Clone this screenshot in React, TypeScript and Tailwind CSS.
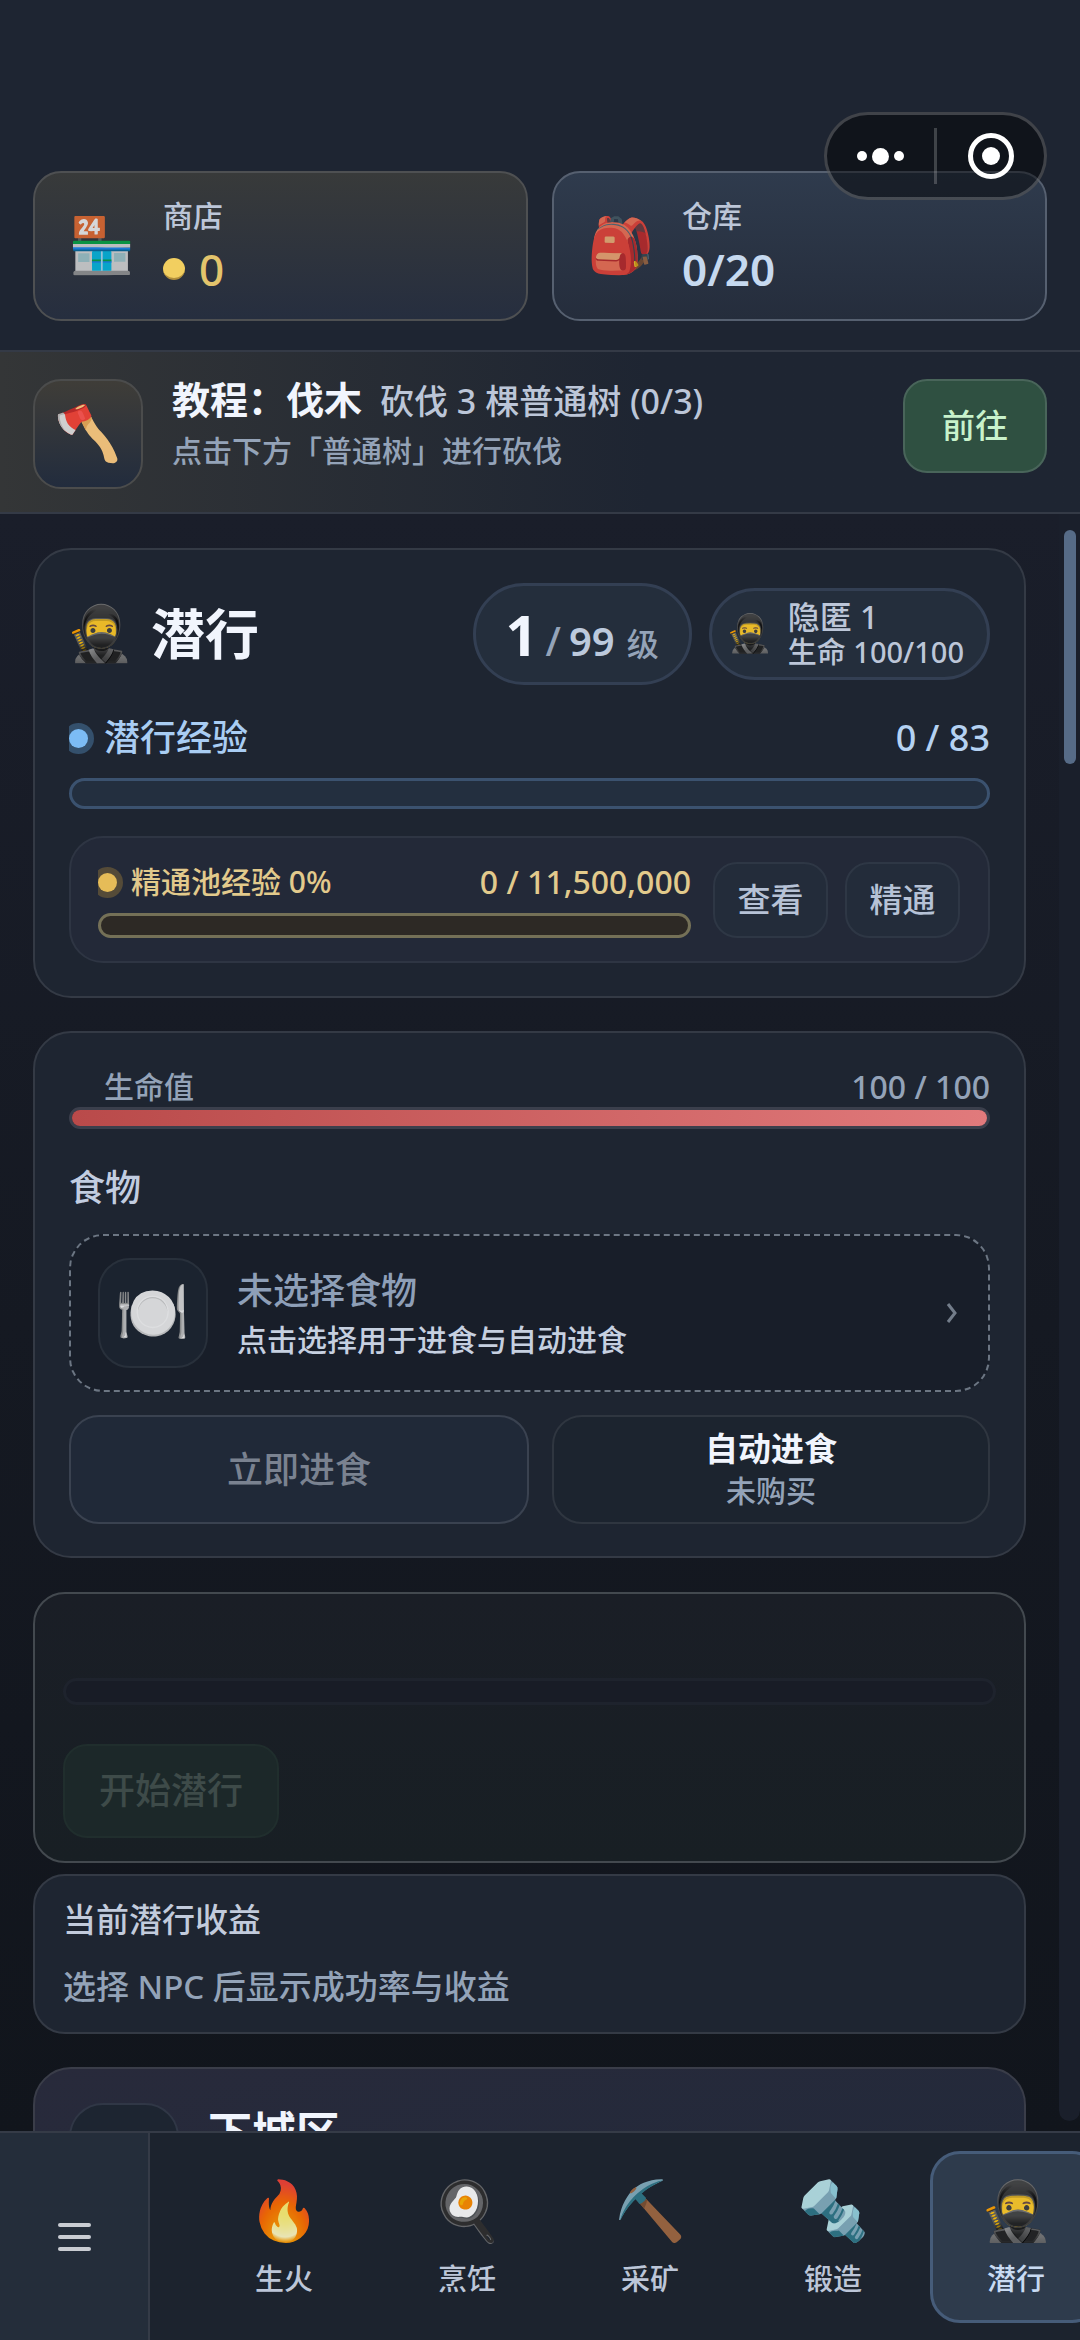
import type { ReactNode } from "react";

function Emoji({ children, className }: { children: ReactNode; className: string }) {
  return (
    <span aria-hidden="true" className={`flex shrink-0 items-center justify-center font-['Noto_Color_Emoji'] ${className}`}>
      {children}
    </span>
  );
}

function Capsule() {
  return (
    <div className="absolute top-[112px] right-[33px] flex h-[88px] w-[223px] items-center rounded-full border-[3px] border-white/20 bg-black/45">
      <button type="button" aria-label="更多" className="flex flex-1 items-center justify-center gap-[5px]">
        <span className="size-[10px] rounded-full bg-white" />
        <span className="size-[17px] rounded-full bg-white" />
        <span className="size-[10px] rounded-full bg-white" />
      </button>
      <span className="h-14 w-[3px] bg-white/20" />
      <button type="button" aria-label="关闭" className="flex flex-1 items-center justify-center">
        <span className="flex size-[46px] items-center justify-center rounded-full border-[5px] border-white">
          <span className="size-[18px] rounded-full bg-white" />
        </span>
      </button>
    </div>
  );
}

function Header() {
  return (
    <header className="grid grid-cols-2 gap-6 border-b-2 border-[#343a46] bg-[#1e2532] px-[33px] pt-[171px] pb-[29px]">
      <button type="button" className="flex h-[150px] items-center gap-[31px] rounded-[28px] border-2 border-[#4e5052] bg-linear-to-b from-[#383a3a] to-[#262e3f] pl-[37px] text-left">
        <Emoji className="w-[60px] text-[54px] leading-[64px] opacity-80">🏪</Emoji>
        <span className="flex flex-col">
          <span className="text-[30px] leading-[42px] text-[#bcc6d8]">商店</span>
          <span className="mt-1 flex items-center gap-[14px] text-[44px] leading-[56px] text-[#e3c46c]">
            <span className="size-[22px] rounded-full border-b-2 border-[#b08e3c] bg-[#f2cf60]" />0
          </span>
        </span>
      </button>
      <button type="button" className="flex h-[150px] items-center gap-[31px] rounded-[28px] border-2 border-[#566070] bg-linear-to-b from-[#2f3b4d] to-[#252d3c] pl-[37px] text-left">
        <Emoji className="w-[60px] text-[54px] leading-[64px] opacity-80">🎒</Emoji>
        <span className="flex flex-col">
          <span className="text-[30px] leading-[42px] text-[#bcc6d8]">仓库</span>
          <span className="mt-1 text-[44px] leading-[56px] font-semibold text-[#c6d9ef]">0/20</span>
        </span>
      </button>
    </header>
  );
}

function Tutorial() {
  return (
    <section className="flex items-start border-b-2 border-[#343a46] bg-[#1e2532] bg-linear-to-r from-[#343637] to-[#1e2532] to-60% px-[33px] pt-[27px] pb-[23px]">
      <div className="flex size-[110px] shrink-0 items-center justify-center rounded-[28px] border-2 border-[#4b4c4c] bg-linear-to-b from-[#3f3d38] to-[#222c3d]">
        <Emoji className="text-[54px] leading-[64px] opacity-90">🪓</Emoji>
      </div>
      <div className="ml-[29px] flex-1">
        <div className="flex items-baseline gap-[18px]">
          <h2 className="text-[38px] leading-[40px] font-bold text-[#f1f5fd]">教程：伐木</h2>
          <span className="text-[34px] leading-[40px] text-[#bcc6d8]">砍伐 3 棵普通树 (0/3)</span>
        </div>
        <p className="mt-[10px] text-[30px] leading-[40px] text-[#94a3b8]">点击下方「普通树」进行砍伐</p>
      </div>
      <button type="button" className="h-[94px] w-36 rounded-[24px] border-2 border-[#49655a] bg-[#2f5041] text-[33px] text-[#c8f2cb]">
        前往
      </button>
    </section>
  );
}

function Dot({ className }: { className: string }) {
  return (
    <span className="flex h-8 w-[25px] shrink-0 items-center overflow-hidden">
      <span className={`size-[19px] rounded-full ring-[6px] ${className}`} />
    </span>
  );
}

function SkillCard() {
  return (
    <section className="rounded-[38px] border-2 border-[#343a45] bg-[#1e2531] px-[34px] py-[33px]">
      <div className="flex h-[102px] items-center">
        <Emoji className="w-[62px] text-[54px] leading-[64px] opacity-90">🥷</Emoji>
        <h1 className="ml-5 flex-1 text-[54px] leading-[64px] font-bold text-[#f1f5fd]">潜行</h1>
        <div className="flex h-[102px] items-baseline rounded-full border-[3px] border-[#333f53] bg-[#242e3c] px-[30px] leading-[96px] text-[#94a3b8]">
          <span className="text-[56px] font-bold text-[#f1f5fd]">1</span>
          <span className="ml-2 text-[40px]">/</span>
          <span className="ml-2 text-[40px] font-semibold text-[#bcc9dc]">99</span>
          <span className="ml-3 text-[32px]">级</span>
        </div>
        <div className="ml-[17px] flex h-[92px] items-center rounded-full border-[3px] border-[#333f53] bg-[#242e3c] pr-[23px] pl-4 text-[#bcc6d8]">
          <Emoji className="w-[44px] text-[37px] leading-[44px] opacity-90">🥷</Emoji>
          <div className="ml-4">
            <div className="text-[32px] leading-[36px]">隐匿 1</div>
            <div className="text-[29px] leading-[34px]">生命 100/100</div>
          </div>
        </div>
      </div>

      <div className="mt-[26px] flex items-center text-[36px] leading-[54px] text-[#a9cdf3]">
        <Dot className="bg-[#7cbcf5] ring-[#34506c]" />
        <span id="xp-label" className="ml-[10px] flex-1">潜行经验</span>
        <span className="text-[#b5d2f2]">0 / 83</span>
      </div>
      <div role="progressbar" aria-labelledby="xp-label" aria-valuenow={0} aria-valuemax={83} className="mt-[13px] h-[31px] rounded-full border-[3px] border-[#3b526f] bg-[#232f3f]" />

      <div className="mt-[27px] flex items-center rounded-[34px] border-2 border-[#2e3543] bg-[#232938] py-[23px] pr-[28px] pl-[27px]">
        <div className="flex-1">
          <div className="flex items-center text-[#e2ca8c]">
            <Dot className="bg-[#e6bc58] ring-[#554b38]" />
            <span id="pool-label" className="ml-2 flex-1 text-[30px] leading-[42px]">精通池经验 0%</span>
            <span className="text-[32px] leading-[42px]">0 / 11,500,000</span>
          </div>
          <div role="progressbar" aria-labelledby="pool-label" aria-valuenow={0} aria-valuemax={11500000} className="mt-[10px] h-[25px] rounded-full border-[3px] border-[#747057] bg-[#2d2925]" />
        </div>
        <div className="ml-[22px] flex gap-[17px] text-[33px] text-[#b6c2d6]">
          <button type="button" className="h-[76px] w-[115px] rounded-[24px] border-2 border-[#2e3745] bg-[#232c3a]">查看</button>
          <button type="button" className="h-[76px] w-[115px] rounded-[24px] border-2 border-[#2e3745] bg-[#232c3a]">精通</button>
        </div>
      </div>
    </section>
  );
}

function FoodCard() {
  return (
    <section className="mt-[33px] rounded-[38px] border-2 border-[#343a45] bg-[#1e2531] px-[34px] pt-[34px] pb-8">
      <div className="flex justify-between pl-[35px] leading-[40px] text-[#94a3b8]">
        <span id="hp-label" className="text-[30px]">生命值</span>
        <span className="text-[32px]">100 / 100</span>
      </div>
      <div role="progressbar" aria-labelledby="hp-label" aria-valuenow={100} aria-valuemax={100} className="h-[22px] rounded-full border-[3px] border-[#3b3f4c]">
        <div className="h-4 rounded-full bg-linear-to-r from-[#b94a4a] to-[#e17a7c]" />
      </div>
      <h2 className="mt-[34px] text-[36px] leading-[50px] text-[#c2cde0]">食物</h2>
      <button type="button" className="mt-[21px] flex w-full items-center rounded-[34px] border-2 border-dashed border-[#6c7683] bg-[#181e29] px-[27px] py-[22px] text-left">
        <span className="flex size-[110px] items-center justify-center rounded-[32px] border-2 border-[#28303b] bg-[#1b232f]">
          <Emoji className="text-[60px] leading-[72px] opacity-85">🍽️</Emoji>
        </span>
        <span className="ml-[29px] flex flex-1 flex-col">
          <span className="text-[36px] leading-[48px] text-[#8e9fb7]">未选择食物</span>
          <span className="mt-[5px] text-[30px] leading-[40px] text-[#c6d0e0]">点击选择用于进食与自动进食</span>
        </span>
        <svg viewBox="0 0 12 20" className="mr-[3px] h-5 w-3 fill-none stroke-[#737d8a] stroke-3">
          <path d="M2 1L9 10L2 19" />
        </svg>
      </button>
      <div className="mt-[23px] grid grid-cols-[21fr_20fr] gap-[23px]">
        <button type="button" disabled className="h-[109px] rounded-[30px] border-2 border-[#3a4250] bg-[#202938] text-[36px] text-[#7a8290]">
          立即进食
        </button>
        <button type="button" className="flex h-[109px] flex-col items-center justify-center rounded-[30px] border-2 border-[#2f3640] bg-[#1c242f]">
          <span className="text-[33px] leading-[42px] font-bold text-[#f1f5fd]">自动进食</span>
          <span className="text-[30px] leading-[42px] text-[#94a3b8]">未购买</span>
        </button>
      </div>
    </section>
  );
}

function StealthPanels() {
  return (
    <>
      <section className="mt-[34px] rounded-[32px] border-2 border-[#43494f] bg-linear-to-b from-[#1a1e26] to-[#181f24] px-[28px] pt-[84px] pb-[23px]">
        <div role="progressbar" aria-label="潜行进度" aria-valuenow={0} className="h-[27px] rounded-full border-[3px] border-[#1e232d] bg-[#181c26]" />
        <button type="button" disabled className="mt-[39px] h-[94px] rounded-[24px] border-2 border-[#202e2d] bg-[#1c2829] px-[34px] text-[36px] text-[#3e4b49]">
          开始潜行
        </button>
      </section>
      <section className="mt-[11px] rounded-[32px] border-2 border-[#343a45] bg-[#1e2531] px-[28px] pt-[21px] pb-[22px] text-[33px] leading-[46px]">
        <h2 className="text-[#c2cbdc]">当前潜行收益</h2>
        <p className="mt-[21px] text-[#93a3b8]">选择 NPC 后显示成功率与收益</p>
      </section>
      <section className="mt-[33px] flex h-[240px] items-start rounded-[38px] border-2 border-[#3a3d49] bg-linear-to-br from-[#282a3b] to-[#20293a] px-[34px] pt-[34px]">
        <div className="size-[110px] rounded-[34px] border-2 border-[#303746] bg-[#1d2531]" />
        <h2 className="ml-[29px] text-[44px] leading-[58px] font-bold text-[#f1f5fd]">下城区</h2>
      </section>
    </>
  );
}

const tabs = [
  { icon: "🔥", label: "生火", active: false },
  { icon: "🍳", label: "烹饪", active: false },
  { icon: "⛏️", label: "采矿", active: false },
  { icon: "🔩", label: "锻造", active: false },
  { icon: "🥷", label: "潜行", active: true },
];

function BottomNav() {
  return (
    <nav className="flex h-[209px] shrink-0 border-t-2 border-[#353b47] bg-[#1c232e]">
      <button type="button" aria-label="菜单" className="flex w-[150px] shrink-0 flex-col items-center justify-center gap-2 border-r-2 border-[#353b47] bg-[#242d3a]">
        <span className="h-1 w-[33px] rounded-full bg-[#c9ccd2]" />
        <span className="h-1 w-[33px] rounded-full bg-[#c9ccd2]" />
        <span className="h-1 w-[33px] rounded-full bg-[#c9ccd2]" />
      </button>
      <div className="flex flex-1 gap-[11px] overflow-hidden pt-[18px] pl-12">
        {tabs.map((t) => (
          <button
            key={t.label}
            type="button"
            className={`flex h-[172px] w-[172px] shrink-0 flex-col items-center rounded-[30px] border-[3px] pt-[23px] text-[29px] leading-[40px] ${
              t.active ? "border-[#465c79] bg-[#2e3b4c] text-[#c8daf2]" : "border-transparent text-[#bcc6d8]"
            }`}
          >
            <Emoji className="text-[58px] leading-[68px] opacity-90">{t.icon}</Emoji>
            <span className="mt-[14px]">{t.label}</span>
          </button>
        ))}
      </div>
    </nav>
  );
}

export default function App() {
  return (
    <div className="relative flex h-screen flex-col overflow-hidden bg-[#12161e] font-['Noto_Sans','Noto_Sans_CJK_SC',sans-serif] font-medium">
      <Header />
      <Capsule />
      <Tutorial />
      <div className="flex min-h-0 flex-1 bg-linear-to-b from-[#1a1e2a] via-[#151922] to-[#11151c]">
        <main className="min-w-0 flex-1 overflow-hidden pt-[34px] pl-[33px]">
          <SkillCard />
          <FoodCard />
          <StealthPanels />
        </main>
        <div className="mb-[10px] ml-[33px] w-[21px] rounded-b-full bg-[#1a1f2b] pt-4 pl-[5px]">
          <div className="h-[234px] w-3 rounded-full bg-[#566b87]" />
        </div>
      </div>
      <BottomNav />
    </div>
  );
}
